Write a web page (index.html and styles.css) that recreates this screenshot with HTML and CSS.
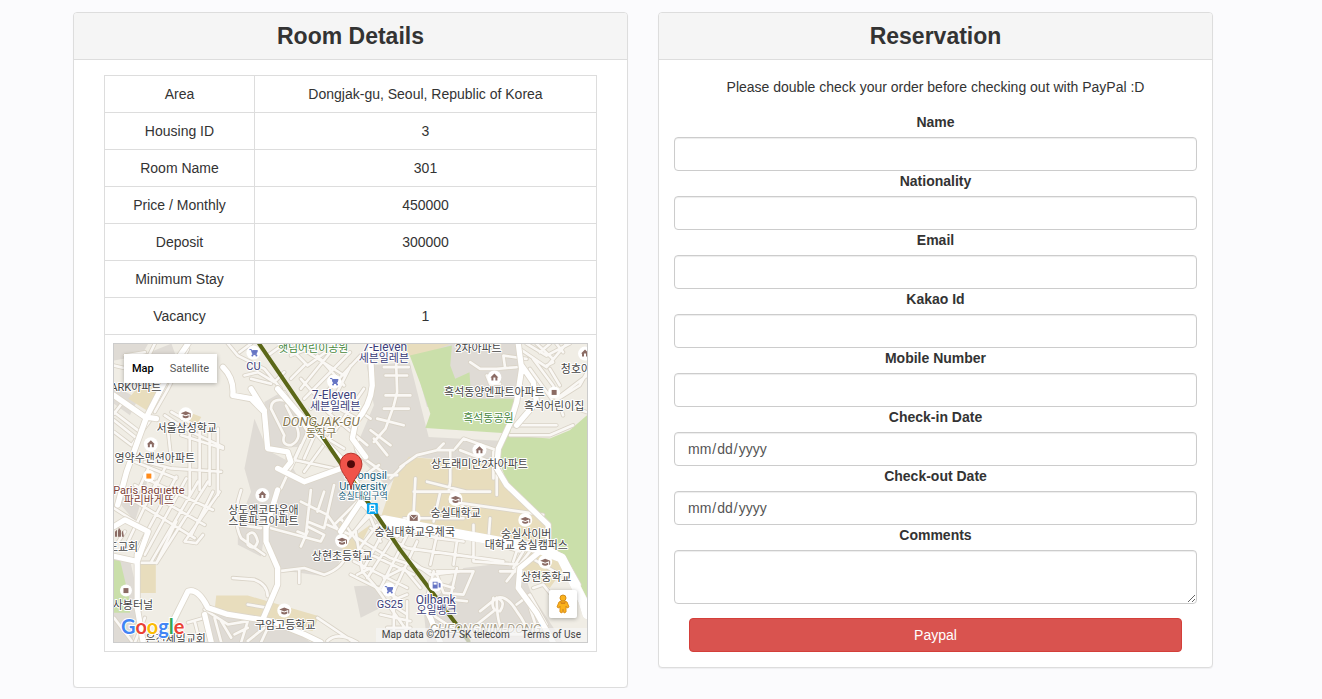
FILE: index.html
```html
<!DOCTYPE html>
<html lang="en">
<head>
<meta charset="utf-8">
<title>Room Reservation</title>
<link rel="stylesheet" href="styles.css">
</head>
<body>
<main class="container">
  <section class="panel">
    <header class="panel-heading"><h1 class="panel-title">Room Details</h1></header>
    <div class="panel-body details">
      <table class="table">
        <tbody>
          <tr><th class="key" scope="row">Area</th><td>Dongjak-gu, Seoul, Republic of Korea</td></tr>
          <tr><th class="key" scope="row">Housing ID</th><td>3</td></tr>
          <tr><th class="key" scope="row">Room Name</th><td>301</td></tr>
          <tr><th class="key" scope="row">Price / Monthly</th><td>450000</td></tr>
          <tr><th class="key" scope="row">Deposit</th><td>300000</td></tr>
          <tr><th class="key" scope="row">Minimum Stay</th><td></td></tr>
          <tr><th class="key" scope="row">Vacancy</th><td>1</td></tr>
          <tr><td colspan="2">
            <div class="map">
              <svg class="map-canvas" viewBox="0 0 475 300" preserveAspectRatio="xMidYMid slice" role="img" aria-label="Map of Dongjak-gu">
                <defs>
                  <g id="home"><circle r="7" fill="#fff"/><path d="M0-4L4 0H3V3H1V0H-1V3H-3V0H-4Z" fill="#8b6b64"/></g>
                  <g id="school"><circle r="7" fill="#fff"/><path d="M-5-1L0-3L5-1L0 1ZM-3 1L0 2L3 1V3Q0 5-3 3ZM4-1H5V3H4Z" fill="#8b6b64"/></g>
                  <g id="cart"><circle r="7" fill="#fff"/><path d="M-4-3H-2L-1 1H3L4-2H-1M-1 2H3" fill="none" stroke="#6574c4" stroke-width="1"/><path d="M-2-2H4L3 1H-1Z" fill="#6574c4"/><circle cx="-1" cy="3" r="1" fill="#6574c4"/><circle cx="3" cy="3" r="1" fill="#6574c4"/></g>
                  <g id="square"><circle r="6" fill="#fff"/><rect x="-2.500" y="-2.500" width="5" height="5" fill="currentColor"/></g>
                  <g id="lanes">
                    <path d="M27 90L110 110M27 290L80 330L140 250M27 230L105 290M27 255L90 305M50 205L27 235M150 230L190 160L250 40M190 90L130 65L150 24M120 50L60 60M180 240L240 280L355 335M200 230L270 270M255 270V480M285 285V465M315 290V450M340 280V480M230 300L355 340M190 290L200 380M120 380L200 400L350 410M90 380L215 430M130 400L80 510M180 400L140 480"/>
                    <path d="M60 480L270 610M90 450L300 570M120 430L325 525M215 425L100 640M245 430L120 660M280 440L140 680M310 440L155 685M345 470L240 620L275 625L295 600M325 470L260 600M155 440L60 640M27 520L90 560M100 684H155L215 560"/>
                    <path d="M370 24L400 60L480 100L530 160M405 50L440 24M420 120L460 110L510 140L540 110M440 130L500 145M490 60L540 24M545 24L610 90L700 24M570 24L720 120M600 90L560 130M640 60L720 150M700 24L590 160M738 50L600 190M770 60L620 220M560 60L650 24M590 130L680 230M540 170L610 290M650 190L760 250M740 90L670 230L790 330M780 160L690 290M700 180L800 250"/>
                    <path d="M560 200Q500 180 500 220L540 300Q530 330 560 330Q600 310 570 260L545 210M590 330L530 460M610 290L560 400M600 410L680 300M620 280L720 340M550 370L690 400M640 280L600 370"/>
                    <path d="M875 24L880 170L870 210L845 280L810 320M840 95H915M845 120H910M845 180H920M840 220H915M820 250L900 270M800 285L860 330M810 310L850 360M765 310Q740 340 780 370L850 420H880M825 390L770 430"/>
                    <path d="M1100 80L1130 100H1180L1240 95M1150 120L1160 145H1190M1205 95L1200 60L1270 70M1280 100L1345 190M1290 70L1350 150L1380 240M1250 40L1330 95L1390 24M1330 90L1350 80M1270 24L1330 60L1400 24M1310 50L1340 24M1300 24L1350 70M1350 200L1430 150L1452 110M1360 190L1452 120M1380 205L1450 230M1225 270H1360M1220 300L1340 300L1410 270M1360 24L1380 50M1340 100L1370 150"/>
                    <path d="M890 395L940 360L1000 345L1020 325M900 390L860 430M1000 345H1050M1055 340L1080 310L1180 345M1070 345L1160 380M1040 350V440L1035 470M930 470H1160M935 430L930 530M970 440L1090 470M1180 420V480M1170 350V430M1040 470L1100 540M1040 500L1320 540M900 550H1080M1010 470L990 560"/>
                    <path d="M690 570L790 470M670 570L740 600L820 520M710 550L760 620M800 520L850 600M790 540L720 630M820 570L760 650M850 570L780 700M880 590L790 730M910 600L830 760M940 620L870 770M760 610L860 670L980 710M770 645L930 720M750 680L910 760M740 720L880 790M800 580L910 640L1200 680M1110 570V680L1250 690M1160 550L1155 620L1250 650M1250 620L1230 680M1060 620L1050 690M1000 600L980 690M930 590L1000 610L1080 620"/>
                    <path d="M780 500L830 620M755 590L775 710L810 750L910 890M800 700L760 720M840 730L900 700L950 760M910 670L980 720L1070 710M1000 710H1110L1080 780L1020 775L1000 720M980 740L1050 760M1000 790L1090 800M860 800L910 780M880 820L910 840M830 840L920 860M850 880H920M870 780V890M910 800V900M1060 700L1040 790M990 710L970 790"/>
                    <path d="M620 465L605 600L580 590M610 590L590 635M500 580L650 620L660 600L610 575M660 470L640 530M590 500L670 540L720 610M690 450L660 580L610 560M410 465Q380 550 410 610L480 660M400 570L470 580M430 600Q450 580 460 620Q450 650 430 630Z"/>
                    <path d="M385 730L450 735Q490 750 490 785M520 710L600 700L660 720Q720 700 730 650M585 705V745M250 864L300 850M270 860L285 920M300 825L370 870L430 860L410 924M350 860L380 910M430 880L390 900M60 590L40 620M27 850L80 920M120 850L90 924M140 900L200 885M330 850L350 924M480 880L430 920M670 920Q700 890 760 924M640 850L750 924M430 810L490 820M500 860L470 924"/>
                    <path d="M1190 710H1250M1280 650L1210 740M1260 650L1230 700M1285 670L1370 720M1130 830L1180 790Q1180 900 1220 900H1260M1180 790Q1210 780 1240 830Q1270 870 1280 910M1170 830L1120 870M1150 890L1110 910M1240 810L1280 780L1330 870M1280 820L1300 880M1170 790Q1160 830 1190 830Q1210 800 1180 790M970 830L1030 870L1100 920M1360 800L1320 750L1290 760"/>
                  </g>
                  <g id="streets">
                    <path d="M250 24L205 90L125 245L65 410L38 510M27 180L120 245L155 250M355 95Q390 130 385 180L440 190L480 230L490 340L550 350L560 380L540 405M440 160L480 225M520 400L600 440L710 400M520 160L580 230L710 370L780 480M798 24L805 150Q800 210 755 260L745 310L785 365M1245 24L1255 100L1240 200L1220 265L1185 340L1180 400L1210 450L1335 570L1335 640L1380 670L1425 750M1255 90L1290 140L1300 200L1240 270M485 550V620L520 700V750L475 855M520 465L485 580M710 590L770 500L880 600M205 860L220 830L250 770Q280 760 310 820L370 840L500 860L600 900L650 924M300 840L320 924M97 660V820L115 924M27 665L95 680M27 575L60 555L130 590L97 680M1310 650L1250 700L1245 760L1300 835L1350 924M1010 924L980 850L950 790"/>
                    <path d="M840 555L1080 600L1300 640L1375 670L1440 800L1452 840" class="wide"/>
                  </g>
                </defs>
                <svg viewBox="27 24 1425 900" width="475" height="300">
                  <rect x="27" y="24" width="1425" height="900" fill="#f0ede5"/>
                  <g fill="#dfdbd5">
                    <path d="M480 200L540 165L610 290L590 335L490 340ZM450 250L490 345L555 380L590 440L520 480L480 600L470 665L400 630V570L440 470L420 400Z"/>
                    <path d="M525 450L600 435L720 400L770 480L730 590L700 700L660 725L520 705L485 600ZM788 90L918 80L975 305L1218 318L1178 390L930 365L850 455L750 350L810 210ZM918 24H1252L1240 215H970Z"/>
                    <path d="M27 150L100 190L75 240L27 205ZM40 500L130 430L90 560ZM27 680L75 675L110 830L80 924H27ZM310 830L520 850L620 924H310ZM200 24L220 80L160 120L110 60ZM27 24H130L110 60L27 75ZM960 830L1080 700L1250 680L1285 780L1380 924H970ZM750 755L850 750L830 820L770 850Z"/>
                  </g>
                  <g fill="#e8ddbd">
                    <path d="M70 190L100 155L165 150L125 225ZM105 688H153V775H105ZM335 783L430 783L645 845L625 890L330 828ZM915 365L1180 390L1215 455L1345 570L1320 625L1080 590L830 550L870 430ZM735 615L800 570L760 650ZM1270 650L1345 665L1390 690L1340 760L1240 700ZM265 235L290 245L275 270L250 258ZM860 24H1040L935 70ZM705 560L760 650L715 650Z"/>
                  </g>
                  <g fill="#cadfaa">
                    <path d="M918 60L1045 30L1040 90L1055 130L1098 110L1103 190H1240L1220 295L965 278L980 235L950 145ZM1452 240L1400 285L1340 310L1205 300L1185 370L1210 440L1335 560L1340 640L1385 660L1452 790ZM27 670L45 675L75 800L75 835H27Z"/>
                  </g>
                  <g fill="none" stroke-linecap="round" stroke-linejoin="round">
                    <use href="#lanes" stroke="#d9d3c7" stroke-width="13"/>
                    <use href="#lanes" stroke="#faf8f5" stroke-width="8"/>
                    <use href="#streets" stroke="#dcd6ca" stroke-width="21"/>
                    <use href="#streets" stroke="#fff" stroke-width="16"/>
                    <path d="M464 24L710 385L804 519L890 646L1000 792L1055 865L1095 920" stroke="#5b6718" stroke-width="12"/>
                  </g>
                </svg>
                <use href="#cart" x="140" y="9"/><use href="#cart" x="221" y="38"/><use href="#cart" x="276" y="247"/>
                <use href="#school" x="72" y="71"/><use href="#home" x="37" y="101"/><use href="#home" x="149" y="152"/>
                <use href="#home" x="382" y="34"/><use href="#home" x="367" y="107"/><use href="#home" x="473" y="10"/>
                <use href="#square" x="442" y="49" color="#8b6b64"/><use href="#square" x="35" y="133" color="#ff8b1a"/><use href="#square" x="12" y="248" color="#8b6b64"/>
                <use href="#school" x="343" y="156"/><use href="#school" x="413" y="177"/><use href="#school" x="433" y="219"/>
                <use href="#school" x="229" y="198"/><use href="#school" x="171" y="268"/>
                <circle cx="301" cy="175" r="7" fill="#fff"/><rect x="297" y="172" width="8" height="6" fill="#8b6b64"/><path d="M297 172L301 176L305 172" fill="none" stroke="#fff"/>
                <circle cx="323" cy="242" r="7" fill="#fff"/><path d="M320 239H325V246H320ZM326 240L328 241V245H326" fill="#6574c4"/><path d="M321 240H324V242H321Z" fill="#fff"/>
                <path d="M1 194V189L3 187V194M4 194V188L5 185L7 188V194M8 194V189L9 188L10 194" fill="#8b6b64"/>
                <g class="label" text-anchor="middle">
                  <g class="green"><text x="200" y="8">햇님어린이공원</text><text x="376" y="79">흑석동공원</text></g>
                  <g class="navy">
                    <text x="140" y="26">CU</text><text class="latin" x="272" y="7">7-Eleven</text><text x="271" y="18">세븐일레븐</text>
                    <text class="latin" x="221" y="56">7-Eleven</text><text x="222" y="67">세븐일레븐</text><text x="277" y="265">GS25</text>
                    <text class="latin" x="323" y="261">Oilbank</text><text x="324" y="272">오일뱅크</text>
                  </g>
                  <text x="22" y="48">ARK아파트</text><text x="73" y="89">서울삼성학교</text><text x="41" y="119">영약수맨션아파트</text>
                  <text x="366" y="8">2차아파트</text><text x="382" y="53">흑석동양엔파트아파트</text><text x="442" y="67">흑석어린이집</text>
                  <text x="474" y="29">청호아파트</text><text x="367" y="125">상도래미안2차아파트</text>
                  <text x="150" y="171">상도엠코타운애</text><text x="150" y="182">스톤파크아파트</text><text x="229" y="217">상현초등학교</text>
                  <text x="343" y="174">숭실대학교</text><text x="302" y="193">숭실대학교우체국</text>
                  <text x="414" y="195">숭실사이버</text><text x="414" y="206">대학교 숭실캠퍼스</text><text x="434" y="238">상현중학교</text>
                  <text x="172" y="287">구암고등학교</text><text x="62" y="301">은천제일교회</text><text x="19" y="266">사봉터널</text><text x="9" y="208">드교회</text>
                  <g class="brown"><text x="35" y="151">Paris Baguette</text><text x="35" y="161">파리바게뜨</text></g>
                  <g class="district"><text class="district-name" x="208" y="83">DONGJAK-GU</text><text x="208" y="94">동작구</text><text class="district-name faded" x="373" y="291">CHEONGNIM-DONG</text></g>
                  <g class="teal"><text x="253" y="136">Soongsil</text><text x="250" y="147">University</text><text class="station" x="250" y="156">숭실대입구역</text></g>
                </g>
                <g transform="translate(254 160)"><rect width="11" height="11" rx="1" fill="#0ba5ee"/><path d="M3 2H8V8H3ZM3 8L2 10M8 8L9 10" fill="#fff" stroke="#fff"/><path d="M4 3H7V5H4Z" fill="#0ba5ee"/><path d="M4 6H5V7H4ZM6 6H7V7H6Z" fill="#0ba5ee"/></g>
                <path d="M238 146C237 136 227 130 227 121A11 11 0 0 1 249 121C249 130 239 136 238 146Z" fill="#f0534a" stroke="#b5322b"/>
                <circle cx="238" cy="121" r="4" fill="#4f0909"/>
                <text class="logo" x="7" y="292"><tspan fill="#4285f4">G</tspan><tspan fill="#ea4335">o</tspan><tspan fill="#fbbc05">o</tspan><tspan fill="#4285f4">g</tspan><tspan fill="#34a853">l</tspan><tspan fill="#ea4335">e</tspan></text>
              </svg>
              <div class="map-types"><button type="button" class="map-type active">Map</button><button type="button" class="map-type">Satellite</button></div>
              <button type="button" class="pegman" aria-label="Street View">
                <svg width="14" height="20" viewBox="0 0 14 20"><path d="M3 8Q7 5 11 8L13 13L11 14L10 12V18L8 19L7 15L6 19L4 18V12L3 14L1 13Z" fill="#fbb21b" stroke="#dc911b"/><circle cx="7" cy="4" r="3" fill="#fbb21b" stroke="#d18c1b"/><path d="M4 7Q7 10 10 7L9 10H5Z" fill="#d6851a"/></svg>
              </button>
              <div class="credits"><span>Map data ©2017 SK telecom</span><a href="#terms">Terms of Use</a></div>
            </div>
          </td></tr>
        </tbody>
      </table>
    </div>
  </section>

  <section class="panel">
    <header class="panel-heading"><h2 class="panel-title">Reservation</h2></header>
    <form class="panel-body reservation">
      <p class="notice">Please double check your order before checking out with PayPal :D</p>
      <label for="name">Name</label><input class="control" id="name" type="text">
      <label for="nationality">Nationality</label><input class="control" id="nationality" type="text">
      <label for="email">Email</label><input class="control" id="email" type="email">
      <label for="kakao">Kakao Id</label><input class="control" id="kakao" type="text">
      <label for="mobile">Mobile Number</label><input class="control" id="mobile" type="tel">
      <label for="checkin">Check-in Date</label><input class="control" id="checkin" type="date">
      <label for="checkout">Check-out Date</label><input class="control" id="checkout" type="date">
      <label for="comments">Comments</label><textarea class="control comments" id="comments" rows="2"></textarea>
      <button class="pay" type="submit">Paypal</button>
    </form>
  </section>
</main>
</body>
</html>
```
FILE: styles.css
```css
* { box-sizing: border-box; }
body {
  margin: 0;
  padding: 12px 36px 0 0;
  background: #fbfbfd;
  color: #333;
  font: 14px/20px "Helvetica Neue", Helvetica, "Liberation Sans", Arial, sans-serif;
}
.container {
  display: grid;
  grid-template-columns: repeat(2, minmax(0, 1fr));
  align-items: start;
  gap: 30px;
  max-width: 1170px;
  margin: 0 auto;
  padding: 0 15px;
}
.panel {
  background: #fff;
  border: 1px solid #ddd;
  border-radius: 4px;
  box-shadow: 0 1px 1px rgba(0, 0, 0, .05);
  text-align: center;
}
.panel-heading {
  padding: 10px 15px;
  background: #f5f5f5;
  border-bottom: 1px solid #ddd;
  border-radius: 3px 3px 0 0;
}
.panel-title {
  margin: 0;
  font-size: 23px;
  font-weight: 700;
  line-height: 26px;
}
.panel-body { padding: 15px; }
.details { padding: 15px 30px; }
.table {
  width: 100%;
  margin-bottom: 20px;
  border-collapse: collapse;
}
.table th, .table td {
  height: 37px;
  padding: 8px;
  border: 1px solid #ddd;
  font-weight: 400;
}
.table .key { width: 150px; }

.map {
  position: relative;
  height: 300px;
  overflow: hidden;
  border: 1px solid #ccc;
}
.map-canvas { display: block; width: 100%; height: 100%; }
.label {
  fill: #444;
  stroke: #fff;
  stroke-width: 2px;
  stroke-linejoin: round;
  paint-order: stroke;
  font: 11px Roboto, "Noto Sans CJK KR", sans-serif;
}
.green { fill: #48883d; }
.navy { fill: #3b3d78; }
.brown { fill: #7d4339; }
.teal { fill: #17607a; }
.latin { font-size: 12px; }
.station { font-size: 9px; }
.district { fill: #857750; }
.district-name { font-size: 13px; font-style: italic; }
.faded { fill: #a8a08a; }
.wide { stroke-width: 28px; }
.logo {
  font: 20px Lato, sans-serif;
  font-weight: 700;
  stroke: #fff;
  stroke-width: 2px;
  paint-order: stroke;
}
.map-types {
  position: absolute;
  top: 10px;
  left: 10px;
  display: flex;
  border-radius: 2px;
  box-shadow: 0 1px 4px rgba(0, 0, 0, .3);
}
.map-type {
  padding: 8px;
  border: 0;
  background: #fff;
  color: #565656;
  font: 11px/13px Roboto, sans-serif;
}
.map-type.active { color: #000; font-weight: 500; }
.pegman {
  position: absolute;
  right: 10px;
  bottom: 24px;
  display: grid;
  place-items: center;
  width: 28px;
  height: 28px;
  padding: 0;
  border: 0;
  border-radius: 2px;
  background: #fff;
  box-shadow: 0 1px 4px rgba(0, 0, 0, .3);
}
.credits {
  position: absolute;
  right: 0;
  bottom: 0;
  display: flex;
  gap: 12px;
  padding: 0 6px;
  background: rgba(245, 245, 245, .7);
  color: #444;
  font: 10px/14px Roboto, sans-serif;
}
.credits a { color: #444; text-decoration: none; }

.reservation { display: flex; flex-direction: column; }
.notice { margin: 2px 0 15px; }
.reservation label { margin-bottom: 5px; font-weight: 700; }
.control {
  width: 100%;
  height: 34px;
  padding: 6px 12px;
  border: 1px solid #ccc;
  border-radius: 4px;
  background: #fff;
  box-shadow: inset 0 1px 1px rgba(0, 0, 0, .075);
  color: #555;
  font: inherit;
}
.control::-webkit-calendar-picker-indicator { display: none; }
.comments { height: 54px; resize: vertical; }
.pay {
  margin: 14px 15px 0;
  padding: 6px 12px;
  border: 1px solid #d43f3a;
  border-radius: 4px;
  background: #d9534f;
  color: #fff;
  font: inherit;
}
```
